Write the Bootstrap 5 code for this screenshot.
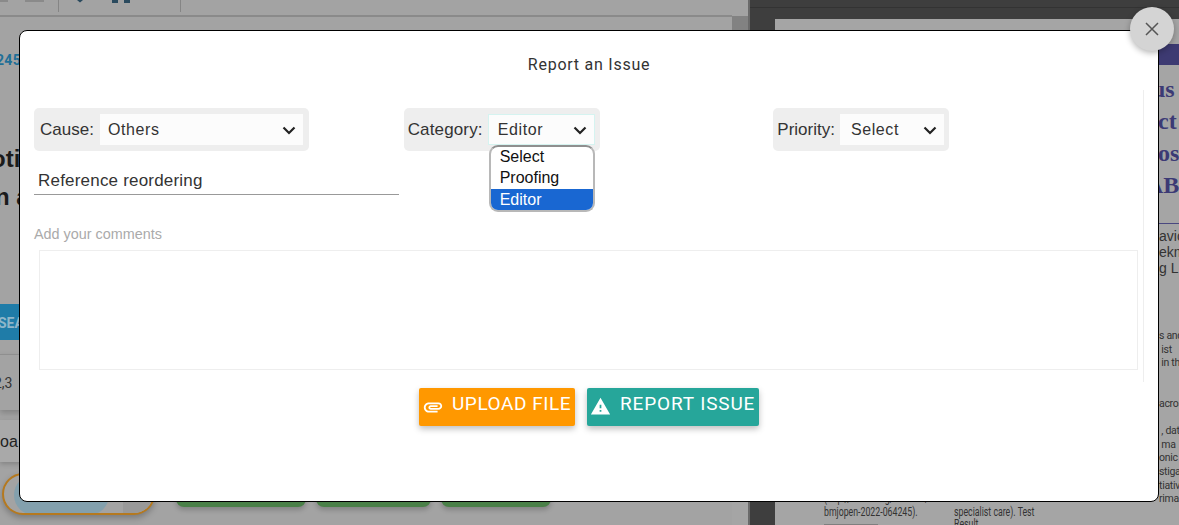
<!DOCTYPE html>
<html lang="en">
<head>
<meta charset="utf-8">
<title>Report an Issue</title>
<link href="https://cdn.jsdelivr.net/npm/bootstrap@5.3.0/dist/css/bootstrap.min.css" rel="stylesheet">
<style>
html,body{height:525px;overflow:hidden;background:#a3a3a3;font-family:"Liberation Sans",Arial,sans-serif}
.stage{height:525px;overflow:hidden;position:relative}
/* dimmed application behind the dialog */
.pane-left{width:732px;height:525px;background:#a3a3a3;flex:none;overflow:hidden}
.pane-strip{width:18px;height:525px;flex:none;background:#a5a5a5;border-right:2px solid #6a6a6a}
.strip-top{height:16px;background:#a3a3a3}
.strip-thumb{height:20px;background:#828282}
.pane-dark{width:429px;flex:none;height:525px;background:#3e3e3e;padding:0 0 0 25px;overflow:hidden}
.dark-line{height:8px;border-bottom:1px solid #333;margin:0 0 11px -25px}
.tool-top{height:17px;border-bottom:2px solid #8a8a8a;position:relative}
.tool-marks{position:absolute;left:0;top:0}
.tool-sep{height:12px;border-right:1px solid #858585}
.tool-a{width:59px}.tool-b{width:122px}
.ref-id{margin:33px 0 0 -4px;height:20px;font:700 14px/20px "Roboto",sans-serif;color:#1f6f97;letter-spacing:.3px}
.big-title{margin-top:70px;font:700 24px/38px "Liberation Sans",sans-serif;color:#1b1b1b;white-space:nowrap}
.bt1{margin-left:-9px}.bt2{margin-left:-5px}
.search-tab{margin-top:88px;height:36px;width:30px;background:#1f7ca8;color:#8fb6c9;font:700 14px/38px "Roboto",sans-serif;text-indent:-2px;overflow:hidden}
.rule-a{margin-top:14px;height:56px;border-top:1px solid #8f8f8f;font:14px/56px "Roboto",sans-serif;color:#333;box-shadow:0 3px 6px rgba(0,0,0,.2);width:30px;text-indent:-6px;overflow:hidden}
.load-bar{margin-top:10px;height:42px;width:30px;background:#a9a9a9;font:16px/44px "Liberation Sans",sans-serif;color:#222;box-shadow:0 2px 5px rgba(0,0,0,.2)}
.foot-row{margin-top:11px;padding-left:2px;align-items:flex-end}
.pill-outer{width:153px;height:42px;border:2px solid #b5791f;border-radius:21px;overflow:hidden;background:#a3a3a3;box-shadow:0 3px 6px rgba(0,0,0,.25)}
.pill-inner{width:95px;height:40px;background:#83a0ad;border-radius:20px;margin-left:10px}
.pill-grey{width:30px;height:40px;background:#999}
.green-set{margin-left:21px;margin-bottom:8px;gap:10px}
.green-btn{height:20px;background:#4a8048;border-radius:0 0 8px 8px;box-shadow:0 3px 5px rgba(0,0,0,.2)}
.gb1{width:130px}.gb2{width:115px}.gb3{width:110px}
.doc-page{height:506px;width:404px;background:#a5a5a5;padding-left:49px;overflow:hidden}
.doc-col-a{width:130px;flex:none;font:12px/14px "Roboto",sans-serif;color:#333;padding-top:472px}
.doc-col-b{width:186px;flex:none;font:12px/12px "Roboto",sans-serif;color:#333;padding-top:487px}
.squeeze-a,.squeeze-b{transform-origin:left top;white-space:nowrap}
.squeeze-a,.squeeze-b{transform:scaleX(.73)}
.doc-chip{width:74px;height:3px;background:#7f7f7f;margin-top:5px}
.doc-col-c{width:60px;flex:none;overflow:hidden;color:#3c3a75}
.doc-band{height:21px;background:#3d3a72;margin-top:25px}
.doc-head{font:700 24px/32px "Liberation Serif",serif;margin-top:8px;white-space:nowrap}
.doc-rule{border-top:1px solid #4a4880;margin-top:22px}
.doc-auth{font:14px/16px "Liberation Sans",sans-serif;color:#333;margin-top:4px;white-space:nowrap;padding-left:19px}
.doc-small{font:10.5px/13.7px "Roboto",sans-serif;color:#333;white-space:nowrap;padding-left:19px;letter-spacing:-.3px}
.ds1{margin-top:53px}.ds2{margin-top:27px}.ds3{margin-top:13px}
/* dialog */
.sheet{position:absolute;left:19px;top:30px;width:1140px;height:472px;background:#fff;border:1px solid #000;border-radius:8px;padding:0 0 0 14px}
.sheet-title{height:59px;padding-top:23px;padding-right:14px;font:16px/22px "Roboto",sans-serif;color:#333;letter-spacing:.75px;text-align:center}
.sheet-body{width:1110px;height:292px;border-right:1px solid #eee;padding-top:18px}
.field{height:43px;background:#eee;border-radius:5px;padding:0 6px;color:#333;font-size:17px;display:inline-flex;align-items:center}
.field-label{margin:0 6px 0 0}
.field-cat{padding:0 5px 0 4px}
.field-cat .field-label{margin-right:5px;letter-spacing:.15px}
.field-pri{padding:0 5px 0 4px}
.field-pri .field-label{margin-right:5px}
.pick{height:31px;border:0;border-radius:0;color:#333;font:16px "Liberation Sans",sans-serif;letter-spacing:.6px;padding:0 0 0 9px;outline:0;appearance:none;-webkit-appearance:none;background:#fcfcfc url("data:image/svg+xml,%3Csvg xmlns='http://www.w3.org/2000/svg' width='14' height='9' viewBox='0 0 14 9'%3E%3Cpath d='M1.5 1.5L7 7l5.5-5.5' fill='none' stroke='%23222' stroke-width='2.2'/%3E%3C/svg%3E") no-repeat right 7px top 12px}
.pick-a{width:203px;padding-left:8px}.pick-b{width:107px;border:1px solid #d5f3f0}.pick-c{width:104px;padding-left:11px}
.pick-b{background-position:right 7px top 11px}
.cell-cat{position:relative}
.menu-list{position:absolute;left:85px;top:37px;width:106px;height:67px;background:#fff;border:2px solid #b8b8b8;border-top-color:#8f8f8f;border-radius:9px;overflow:hidden;z-index:3}
.menu-item{font:16px/21.25px "Liberation Sans",sans-serif;color:#111;padding-left:9px}
.menu-item:first-child{margin-top:-1px}
.menu-on{background:#1967d2;color:#fff;line-height:22px}
.line-input{width:365px;height:44px;padding:17px 0 0 4px;border:0;border-bottom:1px solid #999;border-radius:0;background:transparent;font:17px/24px "Liberation Sans",sans-serif;letter-spacing:.2px;color:#333;outline:0;box-shadow:none;display:block}
.note-label{margin:31px 0 8px;font:14.4px/16px "Liberation Sans",sans-serif;color:#aaa}
.note-box{display:block;width:1099px;height:120px;margin-left:5px;border:1px solid #eee;border-radius:0;resize:none;outline:0;box-shadow:none}
.act-row{padding-top:6px;padding-right:14px;gap:12px}
.act{height:38px;border:0;border-radius:2px;color:#fff;font:19px/32px "Roboto",sans-serif;letter-spacing:.55px;text-transform:uppercase;padding:0 0 0 3px;display:flex;align-items:flex-start;white-space:nowrap;box-shadow:0 3px 6px rgba(0,0,0,.25)}
.act-up{width:156px;background:#ff9800}
.act-rep{width:172px;background:#26a69a;letter-spacing:.85px}
.act svg{fill:#fff;flex:none}
.up-ico{margin:8px 8px 0 0}
.rep-ico{margin:8px 9px 0 0}
.shut{position:absolute;left:1130px;top:7px;width:44px;height:44px;border:0;border-radius:50%;background:#d4d4d4;box-shadow:0 2px 6px rgba(0,0,0,.3);padding:0;display:flex;align-items:center;justify-content:center}
</style>
</head>
<body>
<div class="stage">
  <div class="d-flex">
    <div class="pane-left">
      <div class="tool-top d-flex">
        <div class="tool-sep tool-a"></div><div class="tool-sep tool-b"></div>
        <svg class="tool-marks" width="140" height="6" viewBox="0 0 140 6"><rect width="8" height="2" fill="#8a8a8a"/><rect x="25" width="19" height="2" fill="#8a8a8a"/><path d="M77 0h6l-3 2.5z" fill="#2a4a5e"/><rect x="112" width="6" height="3" fill="#2a4a5e"/><rect x="124" width="6" height="3" fill="#2a4a5e"/></svg>
      </div>
      <div class="ref-id">245</div>
      <div class="big-title"><div class="bt1">oti</div><div class="bt2">n a</div></div>
      <div class="search-tab">SEA</div>
      <div class="rule-a">2,3</div>
      <div class="load-bar">oa</div>
      <div class="foot-row d-flex">
        <div class="pill-outer d-flex justify-content-between"><div class="pill-inner"></div><div class="pill-grey"></div></div>
        <div class="green-set d-flex">
          <div class="green-btn gb1"></div><div class="green-btn gb2"></div><div class="green-btn gb3"></div>
        </div>
      </div>
    </div>
    <div class="pane-strip"><div class="strip-top"></div><div class="strip-thumb"></div></div>
    <div class="pane-dark">
      <div class="dark-line"></div>
      <div class="doc-page d-flex">
        <div class="doc-col-a"><div class="squeeze-a">(http://dx.doi.org/10.1136/<br>bmjopen-2022-064245).<div class="doc-chip"></div></div></div>
        <div class="doc-col-b"><div class="squeeze-b">specialist care). Test<br>Result</div></div>
        <div class="doc-col-c">
          <div class="doc-band"></div>
          <div class="doc-head">&nbsp;&nbsp;us<br>&nbsp;&nbsp;&nbsp;ct<br>&nbsp;&nbsp;&nbsp;os<br>&nbsp;AB</div>
          <div class="doc-rule"></div>
          <div class="doc-auth">avic<br>ekm<br>g LI</div>
          <div class="doc-small ds1">s and<br>&nbsp;ist<br>&nbsp;in the</div>
          <div class="doc-small ds2">acros</div>
          <div class="doc-small ds3">&nbsp;, data<br>&nbsp;ma<br>onic<br>stigat<br>tiative<br>rimar</div>
        </div>
      </div>
    </div>
  </div>

  <div class="sheet" role="dialog" aria-label="Report an Issue">
    <div class="sheet-title">Report an Issue</div>
    <div class="sheet-body">
      <div class="row g-0">
        <div class="col-4">
          <div class="field">
            <label class="field-label" for="cause">Cause:</label>
            <select id="cause" class="pick pick-a"><option>Others</option></select>
          </div>
          <input class="form-control line-input" type="text" value="Reference reordering">
        </div>
        <div class="col-4 cell-cat">
          <div class="field field-cat">
            <label class="field-label" for="cat">Category:</label>
            <select id="cat" class="pick pick-b"><option>Editor</option></select>
          </div>
          <div class="menu-list">
            <div class="menu-item">Select</div>
            <div class="menu-item">Proofing</div>
            <div class="menu-item menu-on">Editor</div>
          </div>
        </div>
        <div class="col-4">
          <div class="field field-pri">
            <label class="field-label" for="pri">Priority:</label>
            <select id="pri" class="pick pick-c"><option>Select</option></select>
          </div>
        </div>
      </div>
      <div class="note-label">Add your comments</div>
      <textarea class="form-control note-box"></textarea>
    </div>
    <div class="act-row d-flex justify-content-center">
      <button class="act act-up" type="button"><svg class="up-ico" width="22" height="22" viewBox="0 0 24 24"><path d="M2 12.5C2 9.46 4.46 7 7.5 7H18c2.21 0 4 1.79 4 4s-1.79 4-4 4H9.5C8.12 15 7 13.88 7 12.5S8.12 10 9.5 10H17v2H9.41c-.55 0-.55 1 0 1H18c1.1 0 2-.9 2-2s-.9-2-2-2H7.5C5.57 9 4 10.57 4 12.5S5.57 16 7.5 16H17v2H7.5C4.46 18 2 15.54 2 12.5z"/></svg>Upload file</button>
      <button class="act act-rep" type="button"><svg class="rep-ico" width="21" height="21" viewBox="0 0 24 24"><path d="M1 21h22L12 2 1 21zm12-3h-2v-2h2v2zm0-4h-2v-4h2v4z"/></svg>Report issue</button>
    </div>
  </div>
  <button class="shut" type="button" aria-label="Close"><svg width="16" height="16" viewBox="0 0 16 16"><path d="M2 2l12 12M14 2L2 14" stroke="#555" stroke-width="1.5" fill="none"/></svg></button>
</div>
</body>
</html>
